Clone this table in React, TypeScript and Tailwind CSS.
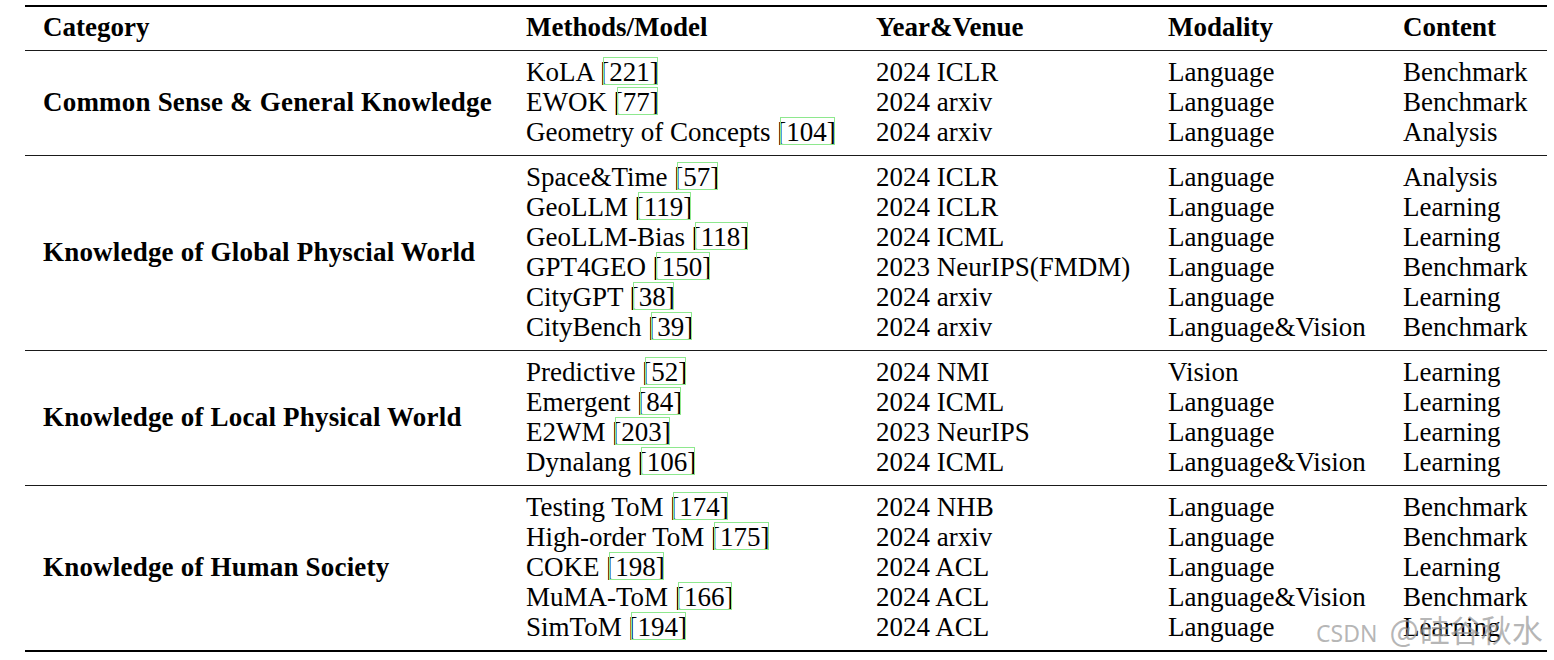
type Row = {
  method: string;
  cite: string;
  venue: string;
  modality: string;
  content: string;
};

type Group = {
  category: string;
  rows: Row[];
};

const groups: Group[] = [
  {
    category: 'Common Sense & General Knowledge',
    rows: [
      { method: 'KoLA', cite: '221', venue: '2024 ICLR', modality: 'Language', content: 'Benchmark' },
      { method: 'EWOK', cite: '77', venue: '2024 arxiv', modality: 'Language', content: 'Benchmark' },
      { method: 'Geometry of Concepts', cite: '104', venue: '2024 arxiv', modality: 'Language', content: 'Analysis' },
    ],
  },
  {
    category: 'Knowledge of Global Physcial World',
    rows: [
      { method: 'Space&Time', cite: '57', venue: '2024 ICLR', modality: 'Language', content: 'Analysis' },
      { method: 'GeoLLM', cite: '119', venue: '2024 ICLR', modality: 'Language', content: 'Learning' },
      { method: 'GeoLLM-Bias', cite: '118', venue: '2024 ICML', modality: 'Language', content: 'Learning' },
      { method: 'GPT4GEO', cite: '150', venue: '2023 NeurIPS(FMDM)', modality: 'Language', content: 'Benchmark' },
      { method: 'CityGPT', cite: '38', venue: '2024 arxiv', modality: 'Language', content: 'Learning' },
      { method: 'CityBench', cite: '39', venue: '2024 arxiv', modality: 'Language&Vision', content: 'Benchmark' },
    ],
  },
  {
    category: 'Knowledge of Local Physical World',
    rows: [
      { method: 'Predictive', cite: '52', venue: '2024 NMI', modality: 'Vision', content: 'Learning' },
      { method: 'Emergent', cite: '84', venue: '2024 ICML', modality: 'Language', content: 'Learning' },
      { method: 'E2WM', cite: '203', venue: '2023 NeurIPS', modality: 'Language', content: 'Learning' },
      { method: 'Dynalang', cite: '106', venue: '2024 ICML', modality: 'Language&Vision', content: 'Learning' },
    ],
  },
  {
    category: 'Knowledge of Human Society',
    rows: [
      { method: 'Testing ToM', cite: '174', venue: '2024 NHB', modality: 'Language', content: 'Benchmark' },
      { method: 'High-order ToM', cite: '175', venue: '2024 arxiv', modality: 'Language', content: 'Benchmark' },
      { method: 'COKE', cite: '198', venue: '2024 ACL', modality: 'Language', content: 'Learning' },
      { method: 'MuMA-ToM', cite: '166', venue: '2024 ACL', modality: 'Language&Vision', content: 'Benchmark' },
      { method: 'SimToM', cite: '194', venue: '2024 ACL', modality: 'Language', content: 'Learning' },
    ],
  },
];

// LaTeX-style citation: green link box around the number
const Cite = ({ n }: { n: string }) => (
  <span>
    [
    <span className="relative">
      {n}]
      <span className="absolute left-[-6px] right-[1px] top-0 h-[28px] border border-[#8ee88e]" />
    </span>
  </span>
);

const Rule = ({ thick }: { thick?: boolean }) => (
  <div className={thick ? 'h-[2px] bg-black' : 'h-px bg-[#1a1a1a]'} />
);

export default function App() {
  return (
    <div className="relative w-[1554px] h-[660px] overflow-hidden bg-white text-black font-['Liberation_Serif','Times_New_Roman',serif] text-[27px] leading-[30px]">
      <div className="ml-[25px] w-[1522px] pt-[5px]">
        <Rule thick />

        {/* header */}
        <div className="grid grid-cols-[483px_350px_292px_235px_1fr] pl-[18px] pt-[5px] pb-[8px] font-bold">
          <div>Category</div>
          <div>Methods/Model</div>
          <div>Year&amp;Venue</div>
          <div>Modality</div>
          <div>Content</div>
        </div>
        <Rule />

        {groups.map((g, gi) => (
          <div key={g.category}>
            <div className="flex pl-[18px] pt-[6px] pb-[8px]">
              <div className="w-[483px] shrink-0 flex items-center font-bold tracking-[0.2px]">{g.category}</div>
              <div className="flex-1">
                {g.rows.map((r) => (
                  <div key={r.method} className="grid grid-cols-[350px_292px_235px_1fr] whitespace-nowrap">
                    <div>
                      {r.method} <Cite n={r.cite} />
                    </div>
                    <div>{r.venue}</div>
                    <div>{r.modality}</div>
                    <div>{r.content}</div>
                  </div>
                ))}
              </div>
            </div>
            <Rule thick={gi === groups.length - 1} />
          </div>
        ))}
      </div>

      {/* watermark */}
      <div className="absolute left-[1316px] top-[613px] flex items-baseline gap-[12px] whitespace-nowrap text-[rgba(150,150,150,0.7)] font-['Noto_Sans','Noto_Sans_CJK_SC',sans-serif] leading-none">
        <span className="text-[23px]">CSDN</span>
        <span className="text-[31px] font-['Noto_Sans_CJK_SC',sans-serif]">@硅谷秋水</span>
      </div>
    </div>
  );
}
